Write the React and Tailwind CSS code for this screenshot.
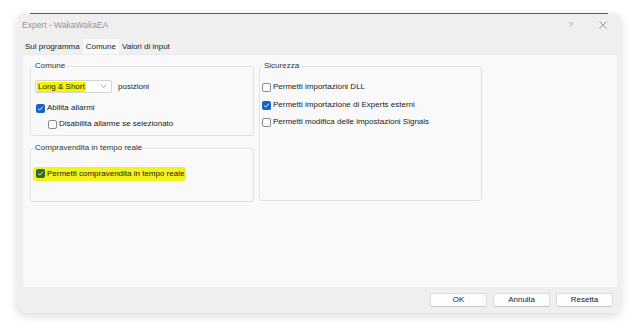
import React from 'react';

const font = { fontFamily: '"Liberation Sans", Arial, sans-serif' };

const Check = ({ checked, tone = 'blue' }) => {
  if (!checked) {
    return <span className="w-[9px] h-[9px] shrink-0 rounded-[2px] border border-[#8c8c8c] bg-[#fbfbfb]" />;
  }
  const bg = tone === 'green' ? 'bg-[#2f6a24]' : 'bg-[#1565c0]';
  return (
    <span className={`w-[9px] h-[9px] shrink-0 rounded-[2px] ${bg} flex items-center justify-center`}>
      <svg width="7" height="7" viewBox="0 0 8 8" fill="none">
        <path d="M1.5 4.2 L3.2 5.8 L6.5 2.2" stroke="#fff" strokeWidth="1" strokeLinecap="round" strokeLinejoin="round" />
      </svg>
    </span>
  );
};

const Row = ({ checked, label, className = '' }) => (
  <div className={`flex items-center gap-[2px] h-[10px] ${className}`}>
    <Check checked={checked} />
    <span className="text-[8px] leading-[10px] text-[#222]">{label}</span>
  </div>
);

const Group = ({ title, className = '', children }) => (
  <div className={`relative border border-[#e1e1e1] rounded-[3px] shadow-[inset_1px_1px_0_#ffffff] ${className}`}>
    <span className="absolute left-[3px] -top-[6px] px-[1px] bg-[#f9f9f9] text-[8px] leading-[10px] text-[#333]">{title}</span>
    {children}
  </div>
);

export default function App() {
  return (
    <div className="w-[639px] h-[333px] bg-white pt-[13px] pl-[17px]" style={font}>
      <div className="w-[604px] h-[300px] bg-[#efefef] rounded-[8px] shadow-[0_3px_10px_rgba(0,0,0,0.14)] flex flex-col">
        <div className="mx-[13px] h-px bg-[#5f5f5f]" />

        {/* Title bar */}
        <div className="h-[22px] flex items-center justify-between pl-[5px] pr-[14px]">
          <span className="text-[8.5px] text-[#959595]">Expert - WakaWakaEA</span>
          <div className="flex items-center gap-[26px] text-[#9a9a9a]">
            <span className="text-[8px]">?</span>
            <svg width="8" height="8" viewBox="0 0 8 8">
              <path d="M0.5 0.5 L7.5 7.5 M7.5 0.5 L0.5 7.5" stroke="#8a8a8a" strokeWidth="0.8" />
            </svg>
          </div>
        </div>

        {/* Tabs */}
        <div className="h-[18px] flex items-end pl-[6px] text-[8px] text-[#222]">
          <span className="h-[14px] px-[2px] flex items-center">Sul programma</span>
          <span className="h-[15px] px-[3px] ml-[1px] flex items-center bg-[#f9f9f9]">Comune</span>
          <span className="h-[14px] px-[2px] ml-[1px] flex items-center">Valori di input</span>
        </div>

        {/* Panel */}
        <div className="ml-[5px] mr-[3px] h-[234px] bg-[#f9f9f9] border border-[#ebebeb] pt-[11px] pl-[7px] flex gap-[5px]">
          <div className="w-[224px] flex flex-col gap-[12px]">
            <Group title="Comune" className="h-[70px] pt-[13px] pl-[4px]">
              <div className="flex items-center gap-[6px]">
                <div className="w-[77px] h-[13px] bg-white border border-[#d4d4d4] rounded-[2px] flex items-center justify-between pl-[1px] pr-[4px]">
                  <span className="bg-[#f4f400] px-[1px] text-[8px] leading-[10px] text-[#222]">Long &amp; Short</span>
                  <svg width="7" height="5" viewBox="0 0 7 5">
                    <path d="M0.8 1 L3.5 3.6 L6.2 1" stroke="#8a8a8a" strokeWidth="0.8" fill="none" />
                  </svg>
                </div>
                <span className="text-[8px] text-[#222]">posizioni</span>
              </div>
              <Row checked label="Abilita allarmi" className="mt-[10px] ml-[1px]" />
              <Row label="Disabilita allarme se selezionato" className="mt-[6px] ml-[13px]" />
            </Group>
            <Group title="Compravendita in tempo reale" className="h-[54px] pt-[11px] pl-[2px]">
              <div className="inline-flex items-center gap-[2px] bg-[#f2f21c] pl-[3px] pr-[2px] py-[2px] rounded-[3px]">
                <Check checked tone="green" />
                <span className="text-[8px] leading-[10px] text-[#1a1a1a]">Permetti compravendita in tempo reale</span>
              </div>
            </Group>
          </div>

          <Group title="Sicurezza" className="w-[223px] h-[135px] pt-[15px] pl-[2px]">
            <Row label="Permetti importazioni DLL" />
            <Row checked label="Permetti importazione di Experts esterni" className="mt-[8px]" />
            <Row label="Permetti modifica delle impostazioni Signals" className="mt-[7px]" />
          </Group>
        </div>

        {/* Footer */}
        <div className="flex-1 flex items-center justify-end gap-[6px] pr-[8px] pb-[1px]">
          {['OK', 'Annulla', 'Resetta'].map((b) => (
            <button
              key={b}
              className="w-[57px] h-[14px] bg-[#fdfdfd] border border-[#dcdcdc] border-b-[#c8c8c8] rounded-[2px] text-[8px] leading-[10px] text-[#222]"
            >
              {b}
            </button>
          ))}
        </div>
      </div>
    </div>
  );
}
